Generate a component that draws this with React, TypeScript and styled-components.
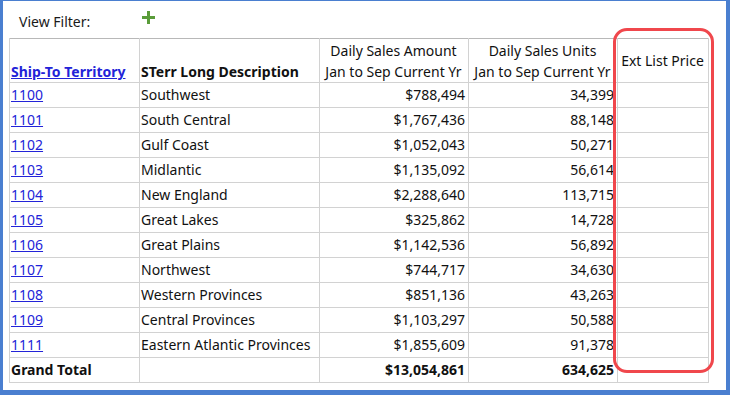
import React from 'react';
import styled, { createGlobalStyle } from 'styled-components';

interface Territory {
  code: string;
  name: string;
  amount: string;
  units: string;
}

const rows: Territory[] = [
  { code: '1100', name: 'Southwest', amount: '$788,494', units: '34,399' },
  { code: '1101', name: 'South Central', amount: '$1,767,436', units: '88,148' },
  { code: '1102', name: 'Gulf Coast', amount: '$1,052,043', units: '50,271' },
  { code: '1103', name: 'Midlantic', amount: '$1,135,092', units: '56,614' },
  { code: '1104', name: 'New England', amount: '$2,288,640', units: '113,715' },
  { code: '1105', name: 'Great Lakes', amount: '$325,862', units: '14,728' },
  { code: '1106', name: 'Great Plains', amount: '$1,142,536', units: '56,892' },
  { code: '1107', name: 'Northwest', amount: '$744,717', units: '34,630' },
  { code: '1108', name: 'Western Provinces', amount: '$851,136', units: '43,263' },
  { code: '1109', name: 'Central Provinces', amount: '$1,103,297', units: '50,588' },
  { code: '1111', name: 'Eastern Atlantic Provinces', amount: '$1,855,609', units: '91,378' },
];

const GlobalStyle = createGlobalStyle`
  html, body {
    margin: 0;
    padding: 0;
    background: #ffffff;
  }
  body {
    font-family: "Noto Sans", "Open Sans", Arial, sans-serif;
    font-size: 14px;
    color: #111;
  }
`;

const Frame = styled.div`
  box-sizing: border-box;
  width: 730px;
  height: 395px;
  border-style: solid;
  border-color: #4a7fd0;
  border-width: 1px 4px 5px 3px;
  background: #fff;
  position: relative;
  overflow: hidden;
`;

const Toolbar = styled.div`
  display: flex;
  align-items: center;
  height: 37px;
  padding-left: 16px;
  padding-top: 4px;
  box-sizing: border-box;
`;

const FilterLabel = styled.span`
  font-size: 14px;
  color: #1a1a1a;
  width: 123px;
`;

const AddButton = styled.span`
  display: inline-flex;
  align-items: center;
  margin-top: -8px;
`;

const TableWrap = styled.div`
  padding-left: 6px;
  position: relative;
`;

const Grid = styled.table`
  border-collapse: collapse;
  table-layout: fixed;
  width: 700px;
  border-top: 1px solid #b8b8b8;
  border-left: 1px solid #c8c8c8;
  border-right: 1px solid #c8c8c8;
`;

const HeadCell = styled.th<{ $align?: 'left' | 'center'; $valign?: 'bottom' | 'middle'; $bold?: boolean }>`
  height: 44px;
  padding: 0 2px 0 1px;
  box-sizing: border-box;
  border: 1px solid #d2d2d2;
  border-top: none;
  text-align: ${p => p.$align || 'left'};
  vertical-align: ${p => p.$valign || 'bottom'};
  font-weight: ${p => (p.$bold ? 700 : 400)};
  font-size: 14px;
  line-height: 21px;
  white-space: nowrap;
  overflow: hidden;
  color: #111;
`;

const Cell = styled.td<{ $num?: boolean; $bold?: boolean }>`
  height: 22px;
  padding: 0 3px 2px 1px;
  border: 1px solid #d2d2d2;
  text-align: ${p => (p.$num ? 'right' : 'left')};
  font-weight: ${p => (p.$bold ? 700 : 400)};
  font-size: 14px;
  white-space: nowrap;
  overflow: hidden;
  color: #111;
`;

const Link = styled.a<{ $bold?: boolean }>`
  color: #2323d8;
  text-decoration: underline;
  font-weight: ${p => (p.$bold ? 700 : 400)};
`;

const Highlight = styled.div`
  position: absolute;
  left: 610px;
  top: -10px;
  width: 101px;
  height: 345px;
  box-sizing: border-box;
  border: 3px solid #f0474c;
  border-radius: 14px;
  pointer-events: none;
`;

const PlusIcon = () => (
  <svg width="13" height="13" viewBox="0 0 13 13">
    <rect x="5" y="0" width="3" height="13" fill="#5a9c3a" />
    <rect x="0" y="5" width="13" height="3" fill="#5a9c3a" />
  </svg>
);

const App: React.FC = () => (
  <>
    <GlobalStyle />
    <Frame>
      <Toolbar>
        <FilterLabel>View Filter:</FilterLabel>
        <AddButton>
          <PlusIcon />
        </AddButton>
      </Toolbar>
      <TableWrap>
        <Grid>
          <colgroup>
            <col style={{ width: 130 }} />
            <col style={{ width: 180 }} />
            <col style={{ width: 149 }} />
            <col style={{ width: 149 }} />
            <col style={{ width: 91 }} />
          </colgroup>
          <thead>
            <tr>
              <HeadCell $bold>
                <Link href="#" $bold>Ship-To Territory</Link>
              </HeadCell>
              <HeadCell $bold>STerr Long Description</HeadCell>
              <HeadCell $align="center">
                Daily Sales Amount
                <br />
                Jan to Sep Current Yr
              </HeadCell>
              <HeadCell $align="center">
                Daily Sales Units
                <br />
                Jan to Sep Current Yr
              </HeadCell>
              <HeadCell $align="center" $valign="middle">Ext List Price</HeadCell>
            </tr>
          </thead>
          <tbody>
            {rows.map(r => (
              <tr key={r.code}>
                <Cell>
                  <Link href="#">{r.code}</Link>
                </Cell>
                <Cell>{r.name}</Cell>
                <Cell $num>{r.amount}</Cell>
                <Cell $num>{r.units}</Cell>
                <Cell />
              </tr>
            ))}
            <tr>
              <Cell $bold>Grand Total</Cell>
              <Cell />
              <Cell $num $bold>$13,054,861</Cell>
              <Cell $num $bold>634,625</Cell>
              <Cell />
            </tr>
          </tbody>
        </Grid>
        <Highlight />
      </TableWrap>
    </Frame>
  </>
);

export default App;
